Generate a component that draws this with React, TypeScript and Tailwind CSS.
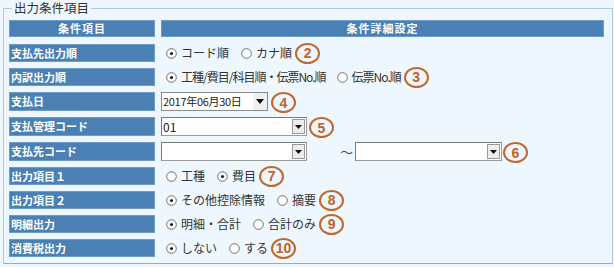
import React from "react";

const jp = { fontFamily: '"Noto Sans CJK JP", "Noto Sans", sans-serif' };

function Radio({ checked }: { checked?: boolean }) {
  return (
    <svg width="11" height="11" viewBox="0 0 11 11" className="shrink-0">
      <circle cx="5.5" cy="5.5" r="4.8" fill="#ffffff" stroke="#6f6f6f" strokeWidth="1" />
      {checked && <circle cx="5.5" cy="5.5" r="1.6" fill="#222" />}
    </svg>
  );
}

function Num({ n }: { n: number }) {
  return (
    <span
      className="inline-flex w-[25px] h-[21px] items-center justify-center rounded-[50%] border-2 border-[#c0692e] text-[#c0622a] text-[14px] font-bold leading-none shrink-0"
      style={{ fontFamily: '"Liberation Sans", Arial, sans-serif' }}
    >
      {n}
    </span>
  );
}

function RadioGroup({
  items,
  num,
  tight,
}: {
  items: { label: string; checked?: boolean }[];
  num: number;
  tight?: boolean;
}) {
  return (
    <div className="flex items-center h-full pl-[5px] text-[12px] text-[#333]" style={jp}>
      {items.map((it, i) => (
        <div key={i} className={`flex items-center gap-[4px] ${i > 0 ? (tight ? "ml-[11px]" : "ml-[12px]") : ""}`}>
          <Radio checked={it.checked} />
          <span className={`whitespace-nowrap leading-none ${tight ? "tracking-[-1px]" : ""}`}>{it.label}</span>
        </div>
      ))}
      <span className="ml-[3px]">
        <Num n={num} />
      </span>
    </div>
  );
}

function ArrowBtn() {
  return (
    <span className="flex w-[13px] h-[15px] items-center justify-center border border-[#9a9a9a] bg-[#ececec] mr-[1px]">
      <svg width="7" height="4" viewBox="0 0 7 4">
        <polygon points="0,0 7,0 3.5,4" fill="#111" />
      </svg>
    </span>
  );
}

function Select({ value, w }: { value?: string; w: string }) {
  return (
    <div
      className={`flex items-center justify-between h-[19px] bg-white border border-[#9a9a9a] border-t-[#7a7a7a] border-l-[#7a7a7a] ${w}`}
    >
      <span className="pl-[1px] text-[12px] text-[#222] leading-none" style={jp}>
        {value}
      </span>
      <ArrowBtn />
    </div>
  );
}

function Label({ text }: { text: string }) {
  return (
    <div
      className="flex items-center h-full bg-[#4a80b3] border border-[#6e9ccb] pl-[1px] text-white text-[11px] font-bold leading-none"
      style={jp}
    >
      {text}
    </div>
  );
}

function Row({ label, h, children }: { label: string; h: string; children: React.ReactNode }) {
  return (
    <div className={`flex gap-[6px] ${h}`}>
      <div className="w-[146px] shrink-0">
        <Label text={label} />
      </div>
      <div className="flex-1 flex items-center">{children}</div>
    </div>
  );
}

export default function App() {
  return (
    <div className="w-[614px] h-[267px] bg-[#eff7fd] overflow-hidden">
      <fieldset className="ml-[3px] w-[610px] h-[264px] border border-[#a9cce6] border-b-[#7fb1d4] bg-[#eef7fd] pl-[5px] pr-[8px] pt-[4px]">
        <legend className="ml-[3px] px-[2px] text-[12.5px] text-[#333] leading-[16px]" style={jp}>
          出力条件項目
        </legend>
        <div className="flex flex-col">
          <div className="flex gap-[6px] h-[17px]">
            <div
              className="w-[146px] shrink-0 flex items-center justify-center bg-[#4a80b3] border border-[#6e9ccb] text-white text-[11px] font-bold tracking-[1px]"
              style={jp}
            >
              条件項目
            </div>
            <div
              className="flex-1 flex items-center justify-center bg-[#4a80b3] border border-[#6e9ccb] text-white text-[11px] font-bold tracking-[1px]"
              style={jp}
            >
              条件詳細設定
            </div>
          </div>
          <div className="flex flex-col gap-[6px] mt-[7px]">
            <Row label="支払先出力順" h="h-[18px]">
              <RadioGroup num={2} items={[{ label: "コード順", checked: true }, { label: "カナ順" }]} />
            </Row>
            <Row label="内訳出力順" h="h-[18px]">
              <RadioGroup
                num={3}
                tight
                items={[{ label: "工種/費目/科目順・伝票No.順", checked: true }, { label: "伝票No.順" }]}
              />
            </Row>
            <Row label="支払日" h="h-[19px]">
              <div className="flex items-center">
                <div className="flex items-center justify-between w-[107px] h-[19px] bg-white border border-[#8a8a8a]">
                  <span className="pl-[1px] text-[11px] text-[#222] leading-none whitespace-nowrap tracking-[-0.3px]" style={jp}>
                    2017年06月30日
                  </span>
                  <span className="flex items-center justify-center w-[14px] h-full bg-[#f0f0f0]">
                    <svg width="8" height="5" viewBox="0 0 8 5">
                      <polygon points="0,0 8,0 4,5" fill="#111" />
                    </svg>
                  </span>
                </div>
                <span className="ml-[3px]">
                  <Num n={4} />
                </span>
              </div>
            </Row>
            <Row label="支払管理コード" h="h-[19px]">
              <div className="flex items-center">
                <Select value="01" w="w-[146px]" />
                <span className="ml-[2px]">
                  <Num n={5} />
                </span>
              </div>
            </Row>
            <Row label="支払先コード" h="h-[19px]">
              <div className="flex items-center">
                <Select w="w-[146px]" />
                <span className="ml-[33px] mr-[2px] text-[13px] text-[#444]" style={jp}>
                  ～
                </span>
                <Select w="w-[147px]" />
                <span className="ml-[1px]">
                  <Num n={6} />
                </span>
              </div>
            </Row>
            <Row label="出力項目１" h="h-[18px]">
              <RadioGroup num={7} items={[{ label: "工種" }, { label: "費目", checked: true }]} />
            </Row>
            <Row label="出力項目２" h="h-[18px]">
              <RadioGroup num={8} items={[{ label: "その他控除情報", checked: true }, { label: "摘要" }]} />
            </Row>
            <Row label="明細出力" h="h-[18px]">
              <RadioGroup num={9} items={[{ label: "明細・合計", checked: true }, { label: "合計のみ" }]} />
            </Row>
            <Row label="消費税出力" h="h-[18px]">
              <RadioGroup num={10} items={[{ label: "しない", checked: true }, { label: "する" }]} />
            </Row>
          </div>
        </div>
      </fieldset>
    </div>
  );
}
